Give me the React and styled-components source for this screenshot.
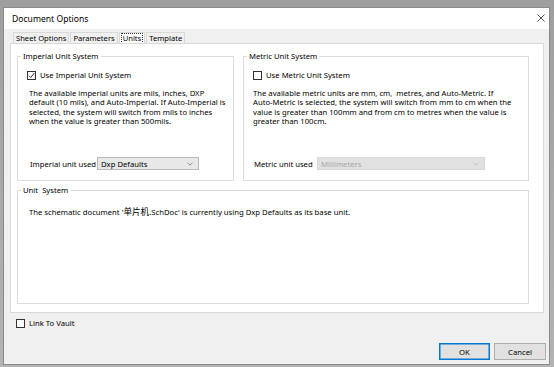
import React from "react";
import styled, { createGlobalStyle } from "styled-components";

const GlobalStyle = createGlobalStyle`
  html, body { margin: 0; padding: 0; }
  body {
    background: #a9a9a9;
    font-family: "Noto Sans", "Noto Sans CJK SC", sans-serif;
    color: #111;
    -webkit-font-smoothing: antialiased;
  }
  * { box-sizing: border-box; }
`;

const FS = "7.7px";

const Screen = styled.div`
  width: 554px;
  height: 367px;
  padding: 7px 4px 2px 3px;
  display: flex;
  background: linear-gradient(#9e9e9e, #b3b3b3);
`;

const Dialog = styled.div`
  flex: 1;
  display: flex;
  flex-direction: column;
  background: #f0f0f0;
  border: 1px solid #8a8a8a;
`;

const TitleBar = styled.div`
  height: 21px;
  background: #fff;
  display: flex;
  align-items: center;
  justify-content: space-between;
  padding: 0 0 0 8px;
`;

const Title = styled.div`
  font-size: 8.6px;
  color: #000;
`;

const CloseButton = styled.div`
  width: 16px;
  height: 21px;
  display: flex;
  align-items: center;
  justify-content: center;
  margin-top: -2px;
`;

const Content = styled.div`
  display: flex;
  flex-direction: column;
  padding: 3px 5px 0 6px;
`;

const TabStrip = styled.div`
  display: flex;
  padding-left: 3px;
  height: 11px;
  font-size: 7.6px;
`;

const Tab = styled.div`
  height: 11px;
  line-height: 10px;
  padding: 0 2px;
  border: 1px solid #d9d9d9;
  border-bottom: none;
  margin-right: 1px;
  background: ${(p) => (p.$active ? "#fff" : "#f0f0f0")};
  color: #000;
  white-space: nowrap;
  display: flex;
  align-items: center;
`;

const FocusText = styled.span`
  outline: 1px dotted #333;
  outline-offset: 0;
  padding: 0 1px;
  line-height: 9px;
`;

const TabPanel = styled.div`
  height: 270px;
  background: #fff;
  border: 1px solid #d9d9d9;
  padding: 12px 14px 8px 6px;
  display: grid;
  grid-template-columns: 217px 286px;
  grid-template-rows: 125px 114px;
  column-gap: 9px;
  row-gap: 9px;
`;

const Group = styled.div`
  border: 1px solid #dcdcdc;
  display: flex;
  flex-direction: column;
  padding: 0 0 10px ${(p) => p.$padLeft || 9}px;
  grid-column: ${(p) => (p.$wide ? "1 / span 2" : "auto")};
  font-size: ${FS};
`;

const Legend = styled.div`
  align-self: flex-start;
  margin: -6px 0 0 ${(p) => 3 - (p.$padLeft || 9)}px;
  padding: 0 2px;
  line-height: 10px;
  background: #fff;
  color: #000;
`;

const CheckRow = styled.label`
  display: flex;
  align-items: center;
  gap: 4px;
  margin-top: ${(p) => p.$mt || 0}px;
  margin-left: ${(p) => p.$ml || 0}px;
  line-height: 9px;
  color: #000;
`;

const Box = styled.span`
  width: 9px;
  height: 9px;
  border: 1px solid #333;
  background: #fff;
  display: inline-flex;
  align-items: center;
  justify-content: center;
  flex-shrink: 0;
`;

const Para = styled.p`
  margin: ${(p) => p.$mt || 0}px 0 0 ${(p) => p.$indent || 0}px;
  line-height: 9.33px;
  color: #000;
  white-space: nowrap;
`;

const SelectRow = styled.div`
  margin-top: auto;
  display: flex;
  align-items: center;
  height: 13px;
`;

const SelectLabel = styled.span`
  width: ${(p) => p.$w}px;
  padding-left: ${(p) => p.$pl || 0}px;
  color: #000;
  flex-shrink: 0;
  white-space: nowrap;
`;

const Select = styled.div`
  width: ${(p) => p.$w}px;
  height: 13px;
  border: 1px solid ${(p) => (p.$disabled ? "#d8d8d8" : "#b9b9b9")};
  background: ${(p) => (p.$disabled ? "#e1e1e1" : "#e8e8e8")};
  color: ${(p) => (p.$disabled ? "#a8a8a8" : "#000")};
  display: flex;
  align-items: center;
  justify-content: space-between;
  padding: 0 5px 0 3px;
`;

const VaultRow = styled(CheckRow)`
  font-size: ${FS};
`;

const ButtonRow = styled.div`
  margin-top: auto;
  display: flex;
  justify-content: flex-end;
  gap: 4px;
  padding: 0 3px 4px 0;
`;

const Button = styled.div`
  width: ${(p) => p.$w}px;
  height: 17px;
  display: flex;
  align-items: center;
  justify-content: center;
  font-size: ${FS};
  color: #000;
  background: #e1e1e1;
  border: 1px solid ${(p) => (p.$primary ? "#0078d7" : "#adadad")};
  box-shadow: ${(p) => (p.$primary ? "inset 0 0 0 0.5px #0078d7" : "none")};
`;

const CJK = styled.span`
  font-family: "Noto Sans CJK SC", sans-serif;
  font-size: 8.6px;
`;

const Chevron = ({ color }) => (
  <svg width="6" height="4" viewBox="0 0 6 4">
    <path d="M0.5 0.8 L3 3.2 L5.5 0.8" fill="none" stroke={color} strokeWidth="0.8" />
  </svg>
);

const Check = () => (
  <svg width="7" height="7" viewBox="0 0 7 7">
    <path d="M0.8 3.6 L2.7 5.5 L6.3 1.2" fill="none" stroke="#222" strokeWidth="0.9" />
  </svg>
);

const CheckBox = ({ checked, label, mt, ml }) => (
  <CheckRow $mt={mt} $ml={ml}>
    <Box>{checked && <Check />}</Box>
    <span>{label}</span>
  </CheckRow>
);

export default function App() {
  return (
    <>
      <GlobalStyle />
      <Screen>
        <Dialog>
          <TitleBar>
            <Title>Document Options</Title>
            <CloseButton>
              <svg width="8" height="8" viewBox="0 0 8 8">
                <path d="M0.5 0.5 L7.5 7.5 M7.5 0.5 L0.5 7.5" stroke="#222" strokeWidth="0.8" />
              </svg>
            </CloseButton>
          </TitleBar>
          <Content>
            <TabStrip>
              <Tab>Sheet Options</Tab>
              <Tab>Parameters</Tab>
              <Tab $active>
                <FocusText>Units</FocusText>
              </Tab>
              <Tab>Template</Tab>
            </TabStrip>
            <TabPanel>
              <Group>
                <Legend>Imperial Unit System</Legend>
                <CheckBox checked label="Use Imperial Unit System" mt={10} />
                <Para $mt={9} $indent={2}>
                  The available imperial units are mils, inches, DXP
                  <br />
                  default (10 mils), and Auto-Imperial. If Auto-Imperial is
                  <br />
                  selected, the system will switch from mils to inches
                  <br />
                  when the value is greater than 500mils.
                </Para>
                <SelectRow>
                  <SelectLabel $w={70} $pl={3}>Imperial unit used</SelectLabel>
                  <Select $w={102}>
                    <span>Dxp Defaults</span>
                    <Chevron color="#777" />
                  </Select>
                </SelectRow>
              </Group>
              <Group>
                <Legend>Metric Unit System</Legend>
                <CheckBox label="Use Metric Unit System" mt={10} />
                <Para $mt={9}>
                  The available metric units are mm, cm,&nbsp; metres, and Auto-Metric. If
                  <br />
                  Auto-Metric is selected, the system will switch from mm to cm when the
                  <br />
                  value is greater than 100mm and from cm to metres when the value is
                  <br />
                  greater than 100cm.
                </Para>
                <SelectRow>
                  <SelectLabel $w={64} $pl={1}>Metric unit used</SelectLabel>
                  <Select $w={168} $disabled>
                    <span>Millimeters</span>
                    <Chevron color="#bbb" />
                  </Select>
                </SelectRow>
              </Group>
              <Group $wide $padLeft={11}>
                <Legend $padLeft={11}>Unit&nbsp; System</Legend>
                <Para $mt={12}>
                  The schematic document '<CJK>单片机</CJK>.SchDoc' is currently using Dxp Defaults as its base unit.
                </Para>
              </Group>
            </TabPanel>
            <VaultRow $mt={6} $ml={6}>
              <Box />
              <span>Link To Vault</span>
            </VaultRow>
          </Content>
          <ButtonRow>
            <Button $w={51} $primary>OK</Button>
            <Button $w={52}>Cancel</Button>
          </ButtonRow>
        </Dialog>
      </Screen>
    </>
  );
}
